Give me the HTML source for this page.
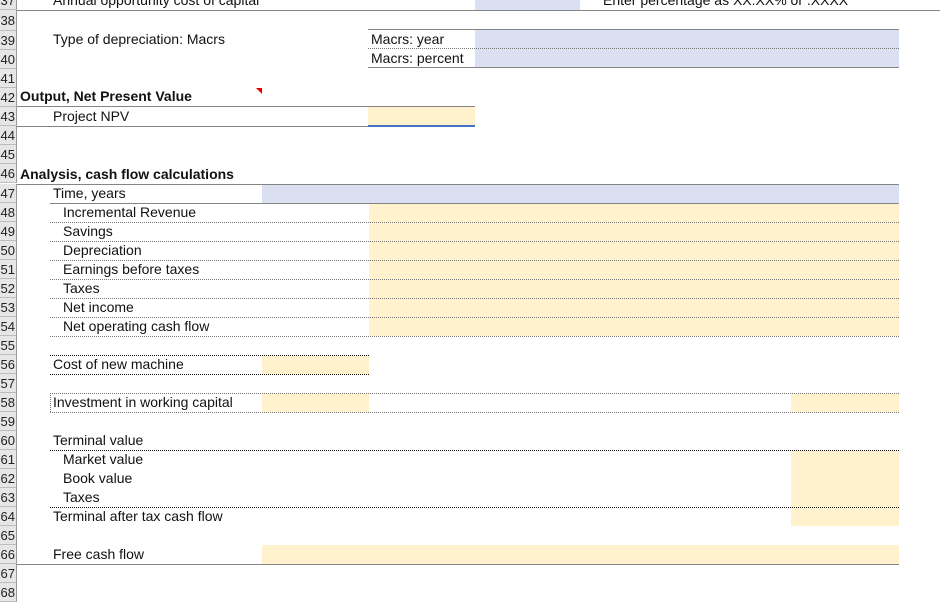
<!DOCTYPE html>
<html><head><meta charset="utf-8"><style>
body{margin:0;width:940px;height:597px;overflow:hidden;background:#fff;position:relative;font-family:"Liberation Sans",sans-serif;font-size:14px;color:#111}
div{position:absolute;box-sizing:border-box}
.h{left:0;width:17px;background:#e6e6e6;border-right:1px solid #9a9a9a;border-bottom:1px solid #bdbdbd;height:19px;overflow:hidden;font-size:13px;color:#222}
.h span{position:absolute;right:1px;top:0;line-height:19px;white-space:nowrap}
.t{height:19px;line-height:19px;white-space:nowrap}
.b{font-weight:bold}
.s{height:0;border-top:1px solid #858585}
.d{height:0;border-top:1px dotted #777}
.dk{height:0;border-top:1px dotted #111}
.y{background:#fff2cc}
.u{background:#dae0f2}
</style></head><body>
<div class="u" style="left:475px;top:0;width:105px;height:10px"></div>
<div class="u" style="left:475px;top:29px;width:424px;height:38px"></div>
<div class="y" style="left:368px;top:107px;width:107px;height:19px"></div>
<div class="u" style="left:262px;top:184px;width:637px;height:19px"></div>
<div class="y" style="left:369px;top:203px;width:530px;height:133px"></div>
<div class="y" style="left:262px;top:355px;width:107px;height:19px"></div>
<div class="y" style="left:262px;top:393px;width:107px;height:19px"></div>
<div class="y" style="left:791px;top:393px;width:108px;height:19px"></div>
<div class="y" style="left:791px;top:450px;width:108px;height:76px"></div>
<div class="y" style="left:262px;top:545px;width:637px;height:19px"></div>
<div class="h" style="top:-9px"><span>37</span></div>
<div class="h" style="top:10px;height:21px"><span style="line-height:21px">38</span></div>
<div class="h" style="top:31px"><span>39</span></div>
<div class="h" style="top:50px"><span>40</span></div>
<div class="h" style="top:69px"><span>41</span></div>
<div class="h" style="top:88px"><span>42</span></div>
<div class="h" style="top:107px"><span>43</span></div>
<div class="h" style="top:126px"><span>44</span></div>
<div class="h" style="top:145px"><span>45</span></div>
<div class="h" style="top:164px"><span>46</span></div>
<div class="h" style="top:184px"><span>47</span></div>
<div class="h" style="top:203px"><span>48</span></div>
<div class="h" style="top:222px"><span>49</span></div>
<div class="h" style="top:241px"><span>50</span></div>
<div class="h" style="top:260px"><span>51</span></div>
<div class="h" style="top:279px"><span>52</span></div>
<div class="h" style="top:298px"><span>53</span></div>
<div class="h" style="top:317px"><span>54</span></div>
<div class="h" style="top:336px"><span>55</span></div>
<div class="h" style="top:355px"><span>56</span></div>
<div class="h" style="top:374px"><span>57</span></div>
<div class="h" style="top:393px"><span>58</span></div>
<div class="h" style="top:412px"><span>59</span></div>
<div class="h" style="top:431px"><span>60</span></div>
<div class="h" style="top:450px"><span>61</span></div>
<div class="h" style="top:469px"><span>62</span></div>
<div class="h" style="top:488px"><span>63</span></div>
<div class="h" style="top:507px"><span>64</span></div>
<div class="h" style="top:526px"><span>65</span></div>
<div class="h" style="top:545px"><span>66</span></div>
<div class="h" style="top:564px"><span>67</span></div>
<div class="h" style="top:583px"><span>68</span></div>
<div class="s" style="left:17px;top:10px;width:923px"></div>
<div class="s" style="left:368px;top:29px;width:531px"></div>
<div class="d" style="left:368px;top:48px;width:531px"></div>
<div class="s" style="left:368px;top:67px;width:531px"></div>
<div class="s" style="left:17px;top:106px;width:458px"></div>
<div class="s" style="left:17px;top:126px;width:351px"></div>
<div style="left:368px;top:125px;width:107px;height:2px;background:#4472c4"></div>
<div class="s" style="left:17px;top:184px;width:882px"></div>
<div class="s" style="left:50px;top:203px;width:849px"></div>
<div class="d" style="left:50px;top:222px;width:849px"></div>
<div class="d" style="left:50px;top:241px;width:849px"></div>
<div class="d" style="left:50px;top:260px;width:849px"></div>
<div class="d" style="left:50px;top:279px;width:849px"></div>
<div class="d" style="left:50px;top:298px;width:849px"></div>
<div class="d" style="left:50px;top:317px;width:849px"></div>
<div class="d" style="left:50px;top:336px;width:849px"></div>
<div class="dk" style="left:50px;top:355px;width:319px"></div>
<div class="dk" style="left:50px;top:374px;width:319px"></div>
<div class="d" style="left:50px;top:393px;width:849px"></div>
<div class="d" style="left:50px;top:412px;width:849px"></div>
<div style="left:50px;top:393px;width:0;height:19px;border-left:1px dotted #777"></div>
<div class="dk" style="left:50px;top:450px;width:849px"></div>
<div class="dk" style="left:50px;top:507px;width:849px"></div>
<div class="s" style="left:17px;top:564px;width:882px"></div>
<div style="left:256px;top:88px;width:0;height:0;border-top:6px solid #e00;border-left:6px solid transparent"></div>
<div class="t" style="left:53px;top:-9px">Annual opportunity cost of capital</div>
<div class="t" style="left:603px;top:-9px">Enter percentage as XX.XX% or .XXXX</div>
<div class="t" style="left:53px;top:30px">Type of depreciation: Macrs</div>
<div class="t" style="left:371px;top:30px">Macrs: year</div>
<div class="t" style="left:371px;top:49px">Macrs: percent</div>
<div class="t b" style="left:20px;top:87px">Output, Net Present Value</div>
<div class="t" style="left:53px;top:107px">Project NPV</div>
<div class="t b" style="left:20px;top:165px">Analysis, cash flow calculations</div>
<div class="t" style="left:53px;top:184px">Time, years</div>
<div class="t" style="left:63px;top:203px">Incremental Revenue</div>
<div class="t" style="left:63px;top:222px">Savings</div>
<div class="t" style="left:63px;top:241px">Depreciation</div>
<div class="t" style="left:63px;top:260px">Earnings before taxes</div>
<div class="t" style="left:63px;top:279px">Taxes</div>
<div class="t" style="left:63px;top:298px">Net income</div>
<div class="t" style="left:63px;top:317px">Net operating cash flow</div>
<div class="t" style="left:53px;top:355px">Cost of new machine</div>
<div class="t" style="left:53px;top:393px">Investment in working capital</div>
<div class="t" style="left:53px;top:431px">Terminal value</div>
<div class="t" style="left:63px;top:450px">Market value</div>
<div class="t" style="left:63px;top:469px">Book value</div>
<div class="t" style="left:63px;top:488px">Taxes</div>
<div class="t" style="left:53px;top:507px">Terminal after tax cash flow</div>
<div class="t" style="left:53px;top:545px">Free cash flow</div>
</body></html>
